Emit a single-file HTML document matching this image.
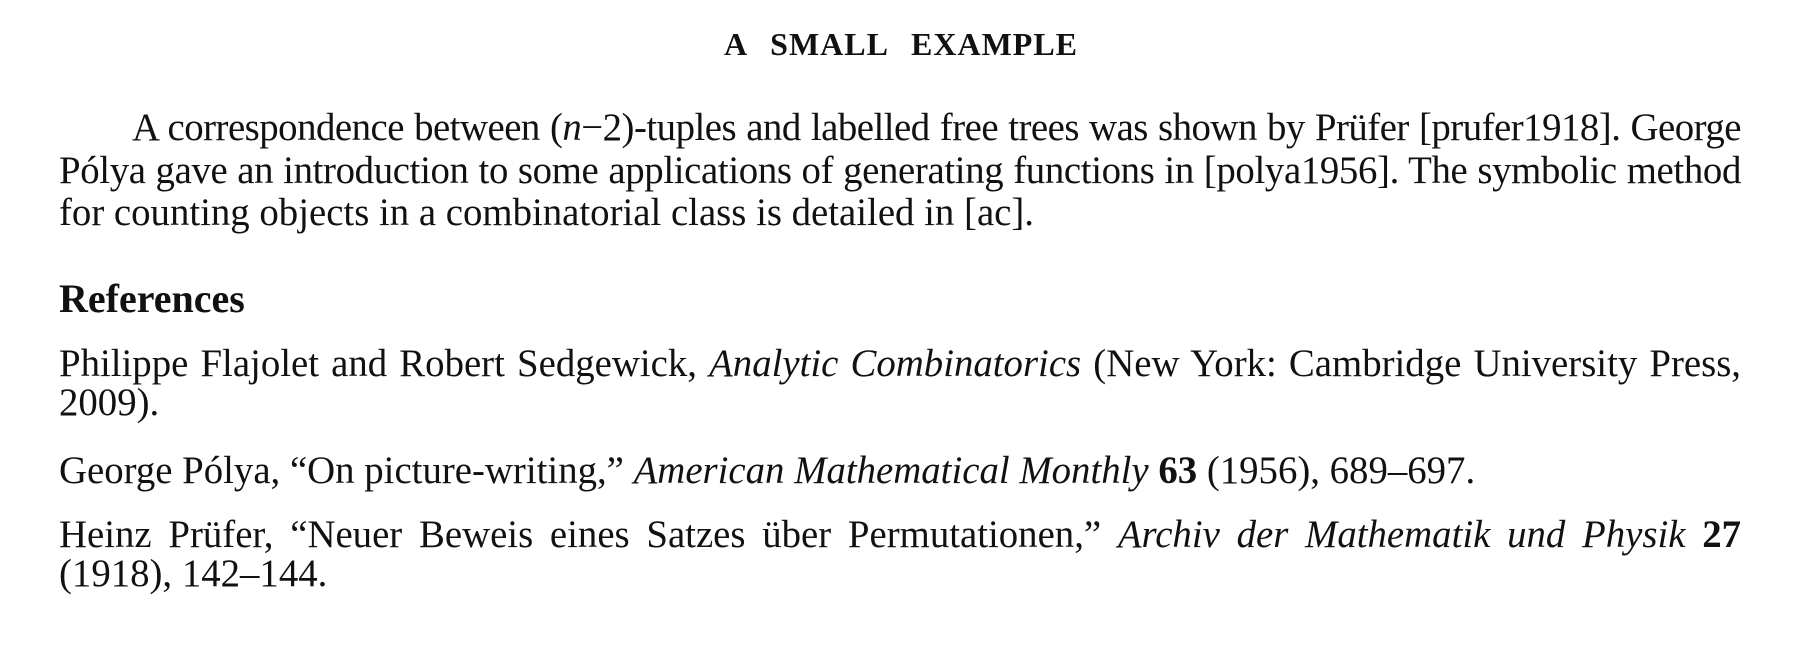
<!DOCTYPE html>
<html><head><meta charset="utf-8"><style>
html,body{margin:0;padding:0;background:#fff;width:1814px;height:646px;overflow:hidden}
body{position:relative;font-family:"Liberation Serif",serif;color:#111}
.l{position:absolute;left:59px;width:1682px;font-size:38.8px;line-height:43px;white-space:nowrap}
.j{text-align:justify;text-align-last:justify}
i{font-style:italic}
</style></head><body>
<div class="l j" style="left:724px;width:354px;top:23px;font-weight:bold;font-size:32px;letter-spacing:1px">A SMALL EXAMPLE</div>
<div class="l j" style="left:132px;width:1609px;top:106px;letter-spacing:-0.5px">A correspondence between (<i>n</i>−2)-tuples and labelled free trees was shown by Prüfer [prufer1918]. George</div>
<div class="l j" style="top:149px;letter-spacing:-0.35px">Pólya gave an introduction to some applications of generating functions in [polya1956]. The symbolic method</div>
<div class="l" style="top:191px">for counting objects in a combinatorial class is detailed in [ac].</div>
<div class="l" style="top:277px;font-weight:bold;font-size:40px">References</div>
<div class="l j" style="top:342px">Philippe Flajolet and Robert Sedgewick, <i>Analytic Combinatorics</i> (New York: Cambridge University Press,</div>
<div class="l" style="top:381px">2009).</div>
<div class="l" style="top:449px">George Pólya, “On picture-writing,” <i>American Mathematical Monthly</i> <b>63</b> (1956), 689–697.</div>
<div class="l j" style="top:513px">Heinz Prüfer, “Neuer Beweis eines Satzes über Permutationen,” <i>Archiv der Mathematik und Physik</i> <b>27</b></div>
<div class="l" style="top:552px">(1918), 142–144.</div>
</body></html>
